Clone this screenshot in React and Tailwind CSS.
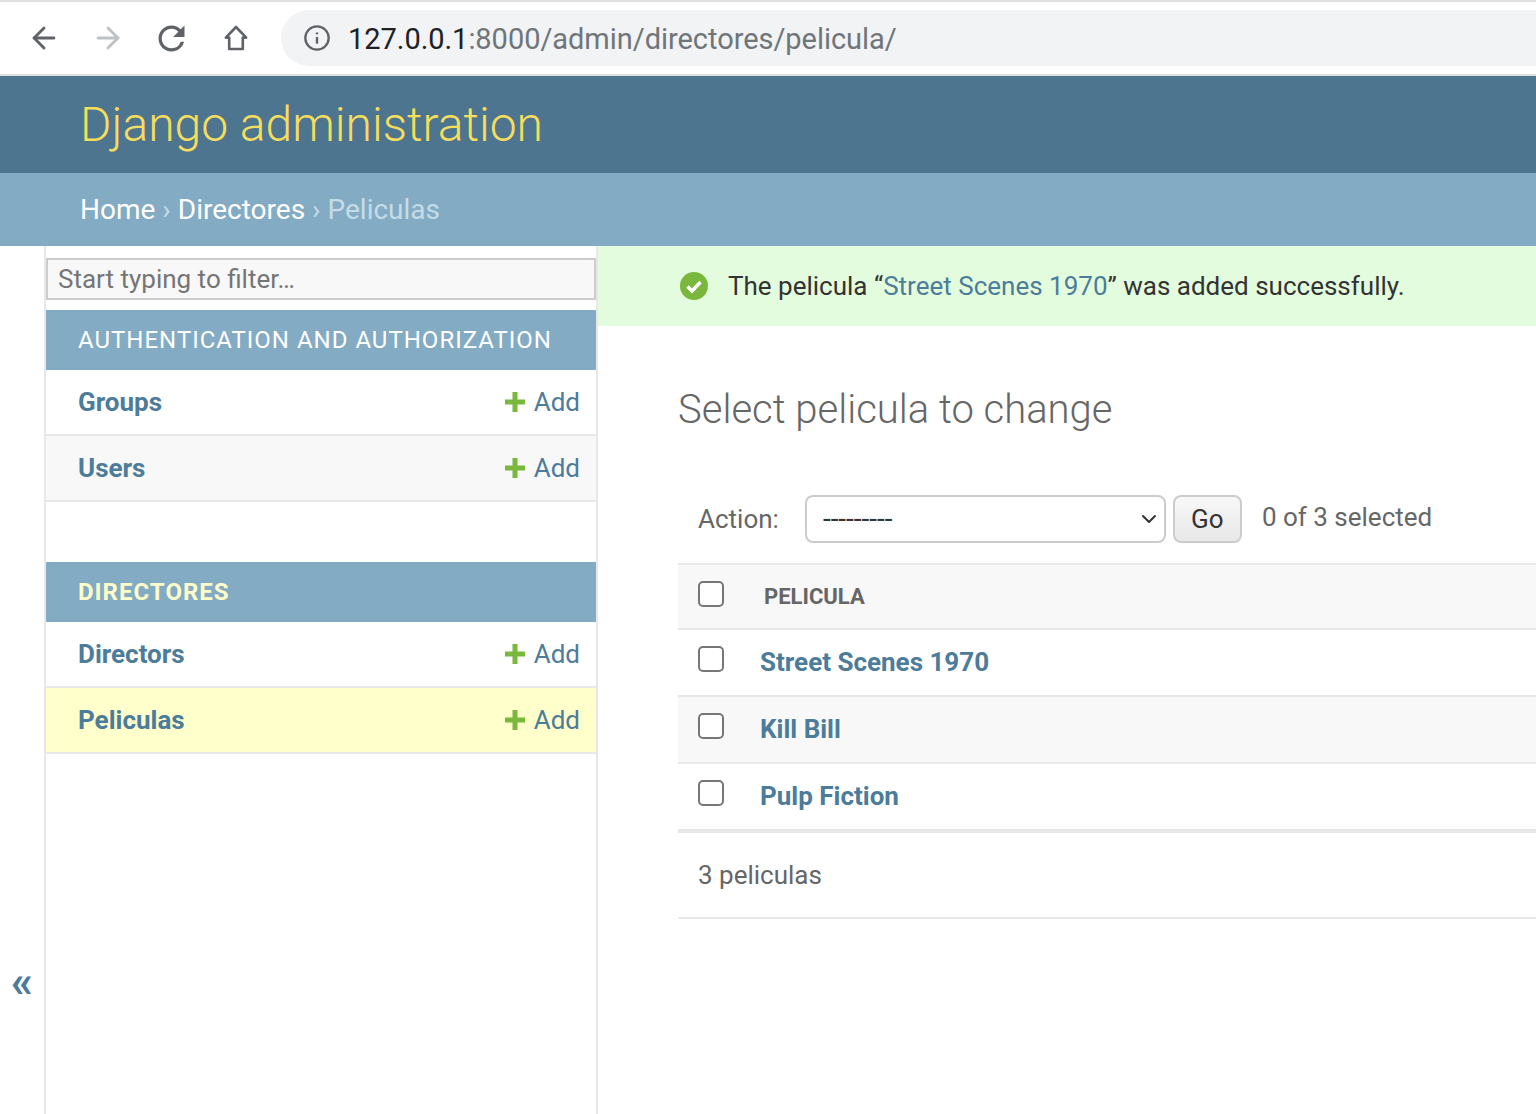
import React from 'react';
import { ArrowLeft, ArrowRight, Info, ChevronDown } from 'lucide-react';

const AddLink = () => (
  <span className="flex items-center gap-2 text-[26px] leading-[32px] font-normal text-[#4c7c9a]">
    <svg width="22" height="22" viewBox="0 0 22 22">
      <path d="M8.5 1h5v7.5H21v5h-7.5V21h-5v-7.5H1v-5h7.5z" fill="#79b83d" />
    </svg>
    Add
  </span>
);

const ModelRow = ({ name, className }) => (
  <div className={`flex items-center justify-between h-[66px] pl-8 pr-4 border-b-2 border-[#e8e8e8] ${className}`}>
    <span className="text-[26px] font-bold text-[#4c7c9a]">{name}</span>
    <AddLink />
  </div>
);

const Checkbox = () => (
  <span className="block w-[26px] h-[26px] rounded-[5px] border-2 border-[#767676] bg-white"></span>
);

const MovieRow = ({ name, className }) => (
  <div className={`flex items-center h-[67px] pl-5 border-b-2 border-[#e8e8e8] ${className}`}>
    <div className="mb-2"><Checkbox /></div>
    <span className="ml-[36px] text-[26px] font-bold text-[#4c7c9a]">{name}</span>
  </div>
);

export default function App() {
  return (
    <div className="h-[1114px] w-[1536px] overflow-hidden bg-white flex flex-col font-['Roboto',sans-serif] text-[#333]">
      {/* browser toolbar */}
      <div className="h-[76px] shrink-0 flex items-center bg-white border-t-2 border-b-2 border-[#e0e0e3] pl-[27px]">
        <ArrowLeft size={34} strokeWidth={2} className="text-[#5f6368]" />
        <ArrowRight size={34} strokeWidth={2} className="ml-[30px] text-[#bdc1c6]" />
        <svg width="39" height="39" viewBox="0 0 24 24" className="ml-[27px]">
          <path
            d="M17.65 6.35A7.958 7.958 0 0 0 12 4c-4.42 0-7.99 3.58-7.99 8s3.57 8 7.99 8c3.73 0 6.84-2.55 7.73-6h-2.08A5.99 5.99 0 0 1 12 18c-3.31 0-6-2.69-6-6s2.69-6 6-6c1.66 0 3.14.69 4.22 1.78L13 11h7V4l-2.35 2.35z"
            fill="#5f6368"
          />
        </svg>
        <svg width="26" height="26" viewBox="0 0 26 26" className="ml-[32px]">
          <path
            d="M13 2 2.8 12.6H6.2V24H19.8V12.6H23.2Z"
            fill="none"
            stroke="#5f6368"
            strokeWidth="2.6"
            strokeLinejoin="round"
          />
        </svg>
        <div className="ml-[32px] flex-1 h-[56px] rounded-l-[28px] bg-[#f1f3f4] flex items-center pl-[22px]">
          <Info size={28} strokeWidth={2} className="text-[#5f6368]" />
          <span className="ml-[17px] pt-1 text-[29px] tracking-[-0.04px] text-[#70757a]">
            <span className="text-[#202124]">127.0.0.1</span>:8000/admin/directores/pelicula/
          </span>
        </div>
      </div>

      {/* django header */}
      <div className="h-[97px] shrink-0 bg-[#4e758f] pl-[80px] flex items-center">
        <span className="text-[48px] font-light text-[#f5dd5d]">Django administration</span>
      </div>
      <div className="h-[73px] shrink-0 bg-[#84abc4] pl-[80px] flex items-center text-[28px] text-white">
        <span>Home</span>
        <span className="mx-[7px] text-[#c4dce8]">›</span>
        <span>Directores</span>
        <span className="mx-[7px] text-[#c4dce8]">›</span>
        <span className="text-[#c4dce8]">Peliculas</span>
      </div>

      <div className="flex flex-1 min-h-0">
        {/* collapse toggle */}
        <div className="w-[46px] shrink-0 border-r-2 border-[#e8e8e8] pt-[716px] pl-[11px] text-[#4c7c9a] text-[44px] font-bold leading-[40px]">
          «
        </div>

        {/* sidebar */}
        <div className="w-[552px] shrink-0 border-r-2 border-[#e8e8e8]">
          <div className="mt-3 h-[42px] border-2 border-[#cccccc] bg-[#f8f8f8] pl-[10px] flex items-center text-[26px] text-[#757575]">
            Start typing to filter…
          </div>
          <div className="mt-[10px] h-[60px] bg-[#84abc4] pl-8 flex items-center text-[24px] text-white tracking-[1px]">
            AUTHENTICATION AND AUTHORIZATION
          </div>
          <ModelRow name="Groups" className="bg-white" />
          <ModelRow name="Users" className="bg-[#f8f8f8]" />

          <div className="mt-[60px] h-[60px] bg-[#84abc4] pl-8 flex items-center text-[24px] font-bold text-[#fdfdc9] tracking-[1px]">
            DIRECTORES
          </div>
          <ModelRow name="Directors" className="bg-white" />
          <ModelRow name="Peliculas" className="bg-[#ffffcc]" />
        </div>

        {/* content */}
        <div className="flex-1 min-w-0">
          <div className="h-[80px] bg-[#e3fcdd] flex items-center pl-[82px] text-[26px] text-[#333]">
            <svg width="28" height="28" viewBox="0 0 28 28">
              <circle cx="14" cy="14" r="14" fill="#79b83d" />
              <path d="M7.5 14.5l4.5 4.5 8.5-9" fill="none" stroke="#fff" strokeWidth="3.5" />
            </svg>
            <span className="ml-[20px]">
              The pelicula “<span className="text-[#4c7c9a]">Street Scenes 1970</span>” was added successfully.
            </span>
          </div>

          <div className="pl-[80px]">
            <h1 className="mt-[58px] text-[40px] leading-[52px] font-light text-[#666]">Select pelicula to change</h1>

            <div className="mt-[57px] h-[52px] flex items-center pl-5 text-[26px] text-[#666]">
              <span>Action:</span>
              <div className="ml-[26px] w-[361px] h-[48px] rounded-[8px] border-2 border-[#cccccc] bg-white flex items-center justify-between pl-4 pr-[3px] text-[#333]">
                <span className="text-[28px]">---------</span>
                <ChevronDown size={24} strokeWidth={2} className="text-[#333]" />
              </div>
              <div className="ml-[7px] w-[69px] h-[48px] rounded-[8px] border-2 border-[#cccccc] bg-gradient-to-b from-[#f8f8f8] to-[#e8e8e8] flex items-center justify-center text-[#333]">
                Go
              </div>
              <span className="ml-5 mb-1">0 of 3 selected</span>
            </div>

            <div className="mt-[18px] h-[67px] flex items-center pl-5 bg-[#f8f8f8] border-y-2 border-[#e8e8e8]">
              <div className="mb-1.5"><Checkbox /></div>
              <span className="ml-[40px] text-[22px] font-bold text-[#666]">PELICULA</span>
            </div>
            <MovieRow name="Street Scenes 1970" className="bg-white" />
            <MovieRow name="Kill Bill" className="bg-[#f8f8f8]" />
            <MovieRow name="Pulp Fiction" className="bg-white h-[69px] border-b-4" />

            <div className="h-[86px] flex items-center pl-5 text-[26px] text-[#666] border-b-2 border-[#e8e8e8]">
              3 peliculas
            </div>
          </div>
        </div>
      </div>
    </div>
  );
}
